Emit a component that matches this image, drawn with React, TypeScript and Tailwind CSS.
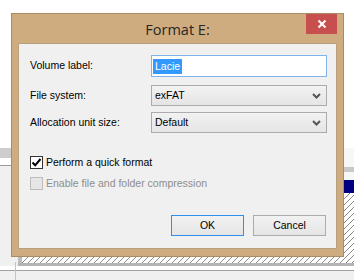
import React from "react";

const ui = { fontFamily: '"Liberation Sans", Arial, sans-serif' };

function Hatch({ className }: { className: string }) {
  return (
    <svg className={className} xmlns="http://www.w3.org/2000/svg">
      <defs>
        <pattern id="hatch" width="6" height="6" patternUnits="userSpaceOnUse">
          <path d="M0 6 L6 0" stroke="#8a8a8a" strokeWidth="1" />
        </pattern>
      </defs>
      <rect width="100%" height="100%" fill="url(#hatch)" />
    </svg>
  );
}

function Chevron() {
  return (
    <svg width="9" height="6" viewBox="0 0 9 6" className="shrink-0">
      <path d="M1 1 L4.5 4.5 L8 1" stroke="#555" strokeWidth="2" fill="none" />
    </svg>
  );
}

function Select({ value }: { value: string }) {
  return (
    <div className="h-[21px] flex items-center justify-between pl-[3px] pr-[5px] border border-[#acacac] bg-gradient-to-b from-[#f2f2f2] to-[#e5e5e5] text-black">
      <span>{value}</span>
      <Chevron />
    </div>
  );
}

export default function App() {
  return (
    <div className="relative w-[354px] h-[280px] bg-white overflow-hidden" style={ui}>
      {/* background window behind the dialog */}
      <div className="absolute left-0 top-[148px] w-[354px] h-[10px] bg-[#cdcdcd]" />
      <div className="absolute left-0 top-[165px] w-[354px] h-[1px] bg-[#9a9a9a]" />
      <div className="absolute left-0 top-[166px] w-[354px] h-[114px] bg-[#f0f0f0]" />
      <div className="absolute left-[344px] top-[148px] w-[10px] h-[32px] bg-[#f7f7f7]" />
      <div className="absolute left-[344px] top-[167px] w-[10px] h-[5px] bg-[#c8c8c8]" />
      <div className="absolute left-[344px] top-[180px] w-[10px] h-[13px] bg-[#000080]" />
      <div className="absolute left-[344px] top-[193px] w-[10px] h-[70px] bg-white" />
      <Hatch className="absolute left-[344px] top-[193px] w-[10px] h-[70px]" />
      <div className="absolute left-[18px] top-[257px] w-[336px] h-[6px] bg-white" />
      <Hatch className="absolute left-[22px] top-[257px] w-[332px] h-[6px]" />
      <div className="absolute left-[18px] top-[257px] w-[4px] h-[9px] bg-[#bcbcbc]" />
      <div className="absolute left-[18px] top-[263px] w-[336px] h-[3px] bg-[#b4b4b4]" />
      <div className="absolute left-0 top-[266px] w-[354px] h-[4px] bg-white" />
      <div className="absolute left-0 top-[270px] w-[354px] h-[1px] bg-[#a0a0a0]" />
      <div className="absolute left-[15px] top-[262px] w-[1px] h-[18px] bg-[#c4c4c4]" />

      {/* dialog window */}
      <div className="absolute left-[11px] top-[13px] w-[333px] h-[244px] border border-[#a88c66] bg-[#cfac80] flex flex-col px-[6px] pb-[7px]">
        <div className="relative h-[29px] flex items-center justify-center">
          <span className="text-[14.5px] text-[#262626] mt-[2px]" style={{ fontFamily: '"Open Sans", "Liberation Sans", sans-serif' }}>
            Format E:
          </span>
          <div className="absolute right-[0px] top-0 w-[31px] h-[20px] bg-[#c7504f] flex items-center justify-center">
            <svg width="10" height="10" viewBox="0 0 10 10">
              <path d="M1.5 1.5 L8.5 8.5 M8.5 1.5 L1.5 8.5" stroke="white" strokeWidth="2" />
            </svg>
          </div>
        </div>
        <div className="flex-1 border border-[#b8a07c] bg-[#f0f0f0] flex flex-col pl-[11px] pr-[9px] pt-[11px] text-[10.5px] text-black">
          <div className="grid grid-cols-[121px_1fr] items-center">
            <span>Volume label:</span>
            <div className="h-[22px] border border-[#7eb4ea] bg-white flex items-center pl-[1px]">
              <span className="bg-[#3399ff] text-white px-[2px] leading-[15px]">Lacie</span>
            </div>
            <span className="mt-[8px]">File system:</span>
            <div className="mt-[8px]">
              <Select value="exFAT" />
            </div>
            <span className="mt-[6px]">Allocation unit size:</span>
            <div className="mt-[6px]">
              <Select value="Default" />
            </div>
          </div>

          <div className="mt-[23px] flex items-center h-[13px] gap-[3px]">
            <div className="w-[13px] h-[13px] border border-[#333] bg-white flex items-center justify-center">
              <svg width="11" height="11" viewBox="0 0 11 11">
                <path d="M1.5 5.5 L4.2 8.3 L9.5 2" stroke="black" strokeWidth="2" fill="none" />
              </svg>
            </div>
            <span>Perform a quick format</span>
          </div>
          <div className="mt-[8px] flex items-center h-[13px] gap-[3px]">
            <div className="w-[13px] h-[13px] border border-[#bcbcbc] bg-[#e6e6e6]" />
            <span className="text-[#8d8d8d]">Enable file and folder compression</span>
          </div>

          <div className="mt-[25px] flex justify-end gap-[9px] pr-[1px]">
            <div className="w-[73px] h-[21px] border border-[#2f8fee] bg-gradient-to-b from-[#f2f2f2] to-[#e5e5e5] flex items-center justify-center">
              OK
            </div>
            <div className="w-[73px] h-[21px] border border-[#acacac] bg-gradient-to-b from-[#f2f2f2] to-[#e5e5e5] flex items-center justify-center">
              Cancel
            </div>
          </div>
        </div>
      </div>
    </div>
  );
}
